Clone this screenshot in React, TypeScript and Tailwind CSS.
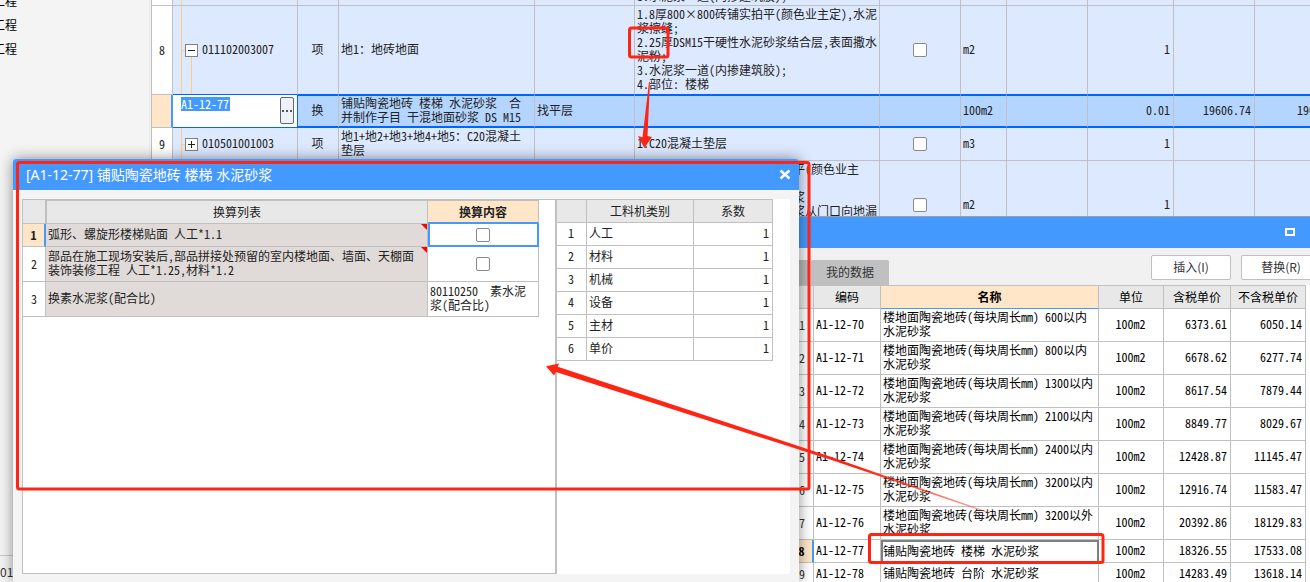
import React from "react";

type BillRow = {
  no: string;
  code: string;
  kind: string;
  name: string;
  feature: string;
  unit: string;
  qty: string;
  height: string;
  open?: boolean;
};

const topRow = "3.水泥浆一道(内掺建筑胶)；";

const billBefore: BillRow = {
  no: "8",
  code: "011102003007",
  kind: "项",
  name: "地1：地砖地面",
  feature:
    "1.8厚800×800砖铺实拍平(颜色业主定),水泥\n浆擦缝;\n2.25厚DSM15干硬性水泥砂浆结合层,表面撒水\n泥粉;\n3.水泥浆一道(内掺建筑胶);\n4.部位: 楼梯",
  unit: "m2",
  qty: "1",
  height: "h-[89px]",
  open: true,
};

const billAfter: BillRow[] = [
  {
    no: "9",
    code: "010501001003",
    kind: "项",
    name: "地1+地2+地3+地4+地5：C20混凝土\n垫层",
    feature: "1.C20混凝土垫层",
    unit: "m3",
    qty: "1",
    height: "h-[33px]",
  },
  {
    no: "10",
    code: "011102003008",
    kind: "项",
    name: "地2：防滑地砖地面",
    feature:
      "1.10厚300×300防滑砖铺实拍平(颜色业主\n定),水泥浆擦缝;\n2.25厚 DS M15 干硬性水泥砂浆\n3.最薄处约30厚DS M15水泥砂浆从门口向地漏\n找坡;\n4.部位: 卫生间",
    unit: "m2",
    qty: "1",
    height: "h-[89px]",
  },
];

const quotas = [
  ["1", "A1-12-70", "楼地面陶瓷地砖(每块周长mm) 600以内\n水泥砂浆", "6373.61", "6050.14"],
  ["2", "A1-12-71", "楼地面陶瓷地砖(每块周长mm) 800以内\n水泥砂浆", "6678.62", "6277.74"],
  ["3", "A1-12-72", "楼地面陶瓷地砖(每块周长mm) 1300以内\n水泥砂浆", "8617.54", "7879.44"],
  ["4", "A1-12-73", "楼地面陶瓷地砖(每块周长mm) 2100以内\n水泥砂浆", "8849.77", "8029.67"],
  ["5", "A1-12-74", "楼地面陶瓷地砖(每块周长mm) 2400以内\n水泥砂浆", "12428.87", "11145.47"],
  ["6", "A1-12-75", "楼地面陶瓷地砖(每块周长mm) 3200以内\n水泥砂浆", "12916.74", "11583.47"],
  ["7", "A1-12-76", "楼地面陶瓷地砖(每块周长mm) 3200以外\n水泥砂浆", "20392.86", "18129.83"],
  ["8", "A1-12-77", "铺贴陶瓷地砖 楼梯 水泥砂浆", "18326.55", "17533.08"],
  ["9", "A1-12-78", "铺贴陶瓷地砖 台阶 水泥砂浆", "14283.49", "13618.14"],
];

const factors = ["人工", "材料", "机械", "设备", "主材", "单价"];

const line = "border-r border-b border-[#c0c0c0] align-middle";
const pad = "pt-0 pr-[3px] pb-[2px] pl-[2px]";
const cell = `${line} ${pad}`;
const head = `${line} bg-[#e8e8e8] px-0 pt-0 pb-px font-normal text-center`;
const grid = "table-fixed border-separate border-spacing-0";

function Check({ label }: { label: string }) {
  return (
    <input
      type="checkbox"
      aria-label={label}
      className="mx-auto block size-[14px] appearance-none rounded-[2px] border border-[#8a8a8a] bg-white"
    />
  );
}

function TreeCell({ code, open }: { code: string; open?: boolean }) {
  return (
    <div className="relative flex h-full items-center pl-[9px]">
      <span className="absolute top-0 bottom-0 left-[5px] w-px bg-[#ffcc80]" />
      <span className="absolute left-[5px] h-px w-1 bg-[#ffcc80]" />
      {open && <span className="absolute top-1/2 bottom-0 left-[15px] w-px bg-[#ffcc80]" />}
      <button
        type="button"
        aria-label={open ? "折叠" : "展开"}
        className="relative flex size-[13px] items-center justify-center border border-[#808080] bg-white"
      >
        <svg viewBox="0 0 11 11" className="size-[11px]" shapeRendering="crispEdges">
          <path d={open ? "M2 5.5h7" : "M2 5.5h7M5.5 2v7"} stroke="#222" strokeWidth="1" />
        </svg>
      </button>
      <span className="pb-[2px] pl-1">{code}</span>
    </div>
  );
}

function BillLine({ row, edge }: { row: BillRow; edge?: boolean }) {
  const box = `${line} bg-[#dde9ff] ${edge ? "border-b-[#0066ff]" : ""}`;
  const c = `${box} ${pad}`;
  return (
    <tr className={row.height}>
      <td className={`${line} bg-white p-0 text-center`}>{row.no}</td>
      <td className={`${box} h-px py-0 pr-0 pl-[3px]`}>
        <TreeCell code={row.code} open={row.open} />
      </td>
      <td className={`${c} text-center`}>{row.kind}</td>
      <td className={c}>{row.name}</td>
      <td className={c} />
      <td className={c}>{row.feature}</td>
      <td className={`${box} p-0`}>
        <Check label={`${row.code} 锁定`} />
      </td>
      <td className={c}>{row.unit}</td>
      <td className={c} />
      <td className={`${c} text-right`}>{row.qty}</td>
      <td className={c} />
      <td className={c} />
    </tr>
  );
}

function BillTable() {
  const sel = `border-r border-r-[#c0c0c0] border-t border-b-2 border-t-[#0066ff] border-b-[#0066ff] bg-[#b3d5ff] align-middle ${pad}`;
  const top = "border-r border-b border-[#c0c0c0] bg-[#dde9ff] py-0 pr-[3px] pl-[2px]";
  return (
    <table className={`${grid} w-[1184px] border-l border-[#c0c0c0] leading-[14px] whitespace-pre text-[#222]`}>
      <colgroup>
        <col className="w-[21px]" />
        <col className="w-[125px]" />
        <col className="w-[41px]" />
        <col className="w-[196px]" />
        <col className="w-[100px]" />
        <col className="w-[245px]" />
        <col className="w-[81px]" />
        <col className="w-[46px]" />
        <col className="w-[81px]" />
        <col className="w-[86px]" />
        <col className="w-[81px]" />
        <col className="w-[81px]" />
      </colgroup>
      <tbody>
        <tr className="h-[6px]">
          <td className="border-r border-b border-[#c0c0c0] bg-white p-0" />
          <td className="border-r border-b border-[#c0c0c0] bg-[#dde9ff] py-0 pr-0 pl-[3px]">
            <div className="relative h-[5px]">
              <span className="absolute top-0 bottom-0 left-[5px] w-px bg-[#ffcc80]" />
            </div>
          </td>
          <td className={top} />
          <td className={top} />
          <td className={top} />
          <td className={top}>
            <div className="flex h-[5px] items-end overflow-hidden pb-[2px]">{topRow}</div>
          </td>
          <td className={top} />
          <td className={top} />
          <td className={top} />
          <td className={top} />
          <td className={top} />
          <td className={top} />
        </tr>
        <BillLine row={billBefore} edge />
        <tr className="h-[33px]">
          <td className="border-r-2 border-b border-r-[#4499ff] border-b-[#c0c0c0] bg-[#ffe6c8] p-0" />
          <td className="border-r border-b border-[#0066ff] bg-white p-0 align-top">
            <div className="flex justify-between pt-[2px] pr-[3px] pl-2">
              <input
                aria-label="编码"
                defaultValue="A1-12-77"
                className="h-[14px] w-[49px] bg-[#4499ff] p-0 leading-[14px] text-white"
              />
              <button
                type="button"
                aria-label="选择定额"
                className="flex h-[27px] w-[14px] items-center justify-center rounded-[2px] border border-[#666] bg-[#edf1f9]"
              >
                <svg viewBox="0 0 12 4" className="h-1 w-3 shrink-0" fill="#555" shapeRendering="crispEdges">
                  <rect x="1" y="1" width="2" height="2" />
                  <rect x="5" y="1" width="2" height="2" />
                  <rect x="9" y="1" width="2" height="2" />
                </svg>
              </button>
            </div>
          </td>
          <td className={`${sel} text-center`}>换</td>
          <td className={sel}>{"铺贴陶瓷地砖 楼梯 水泥砂浆  合\n并制作子目 干混地面砂浆 DS M15"}</td>
          <td className={sel}>找平层</td>
          <td className={sel} />
          <td className={sel} />
          <td className={sel}>100m2</td>
          <td className={sel} />
          <td className={`${sel} text-right`}>0.01</td>
          <td className={`${sel} text-right`}>19606.74</td>
          <td className="border-t border-r border-b-2 border-t-[#0066ff] border-r-[#c0c0c0] border-b-[#0066ff] bg-[#b3d5ff] pt-0 pr-[3px] pb-[2px] pl-[42px] align-middle">
            19606.74
          </td>
        </tr>
        {billAfter.map((r) => (
          <BillLine key={r.no} row={r} />
        ))}
      </tbody>
    </table>
  );
}

function QuotaWindow() {
  const ui = "font-['Noto_Sans_CJK_SC',sans-serif] text-[12px] leading-4 text-[#333] pb-[2px]";
  const btn = `h-[25px] w-20 shrink-0 rounded-[2px] border border-[#c0c0c0] bg-white ${ui}`;
  return (
    <section className="absolute top-[216px] right-0 bottom-0 left-[780px] flex flex-col overflow-hidden border-t border-[#a0a0a0] bg-[#f1f1f1]">
      <header className="flex h-[31px] shrink-0 items-center justify-end bg-[#4499ff] pr-[15px] pb-px">
        <button type="button" aria-label="最大化" className="h-2 w-[10px] border-2 border-white" />
      </header>
      <div className="flex h-[37px] shrink-0 items-end justify-between">
        <div className="flex gap-px">
          <button type="button" aria-label="定额" className="h-[25px] w-[30px] bg-[#b8b8b8]" />
          <button type="button" className={`h-[25px] w-[78px] rounded-t-[2px] bg-[#c0c0c0] ${ui}`}>
            我的数据
          </button>
        </div>
        <div className="-mr-[11px] flex gap-[10px] pb-[5px]">
          <button type="button" className={btn}>插入(I)</button>
          <button type="button" className={btn}>替换(R)</button>
        </div>
      </div>
      <div className="grow bg-white pl-[10px]">
        <table className={`${grid} w-[516px] border-t border-l border-[#c0c0c0] leading-[14px] whitespace-pre text-black`}>
          <colgroup>
            <col className="w-[23px]" />
            <col className="w-[67px]" />
            <col className="w-[218px]" />
            <col className="w-[65px]" />
            <col className="w-[67px]" />
            <col className="w-[75px]" />
          </colgroup>
          <thead>
            <tr className="h-[23px]">
              <th className={head} />
              <th className={head}>编码</th>
              <th className="border-r border-b border-r-[#c0c0c0] border-b-[#4499ff] bg-[#ffe6c8] p-0 text-center font-bold">名称</th>
              <th className={head}>单位</th>
              <th className={head}>含税单价</th>
              <th className={head}>不含税单价</th>
            </tr>
          </thead>
          <tbody>
            {quotas.map(([no, code, name, taxed, untaxed]) => {
              const on = no === "8";
              return (
                <tr key={no} className={Number(no) < 8 ? "h-[33px]" : "h-[23px]"}>
                  <td
                    className={
                      on
                        ? "border-r-2 border-b border-r-[#4499ff] border-b-[#c0c0c0] bg-[#ffe6c8] p-0 text-center font-bold"
                        : `${line} p-0 text-center text-[#333]`
                    }
                  >
                    {no}
                  </td>
                  <td className={cell}>{code}</td>
                  <td className={on ? "border-2 border-[#808080] px-0 pt-0 pb-[2px] align-middle" : cell}>{name}</td>
                  <td className={`${cell} text-center`}>100m2</td>
                  <td className={`${cell} text-right`}>{taxed}</td>
                  <td className={`${cell} text-right`}>{untaxed}</td>
                </tr>
              );
            })}
          </tbody>
        </table>
      </div>
    </section>
  );
}

function Corner() {
  return (
    <svg viewBox="0 0 6 6" className="absolute top-0 right-0 size-[6px]" fill="#ff0000">
      <path d="M0 0h6v6z" />
    </svg>
  );
}

function ConvertDialog() {
  const list = `relative border-r border-b border-[#c0c0c0] bg-[#e0dbd8] ${pad}`;
  return (
    <section
      role="dialog"
      aria-labelledby="convert-title"
      className="absolute top-[159px] bottom-0 left-[13px] flex w-[786px] flex-col rounded-t-[3px] bg-[#f4f4f4] shadow-[0_0_14px_rgba(0,0,0,0.45)]"
    >
      <header className="flex h-[31px] shrink-0 items-center justify-between rounded-t-[3px] bg-[#4499ff] pt-[2px] pr-2 pb-px pl-[13px]">
        <h1 id="convert-title" className="font-['Noto_Sans','Noto_Sans_CJK_SC',sans-serif] text-[14px] leading-5 text-white">
          [A1-12-77] 铺贴陶瓷地砖 楼梯 水泥砂浆
        </h1>
        <button type="button" aria-label="关闭" className="flex size-3 items-center justify-center">
          <svg viewBox="0 0 12 12" className="size-3" stroke="#fff" strokeWidth="2.4">
            <path d="M1.5 1.5l9 8M10.5 1.5l-9 8" />
          </svg>
        </button>
      </header>
      <div className="mx-[9px] mt-[9px] mb-2 flex grow leading-[14px] whitespace-pre text-[#222]">
        <div className="w-[535px] border-t border-r-2 border-b border-l border-[#c0c0c0] bg-white">
          <table className={`${grid} w-[516px]`}>
            <colgroup>
              <col className="w-[23px]" />
              <col className="w-[382px]" />
              <col className="w-[111px]" />
            </colgroup>
            <thead>
              <tr className="h-6">
                <th className={head} />
                <th className={`${head} border-t border-l`}>换算列表</th>
                <th className="border-t border-r border-b-2 border-t-[#c0c0c0] border-r-[#c0c0c0] border-b-[#4499ff] bg-[#ffe6c8] p-0 text-center font-bold">
                  换算内容
                </th>
              </tr>
            </thead>
            <tbody>
              <tr className="h-[23px]">
                <td className="border-r-2 border-b border-r-[#4499ff] border-b-[#c0c0c0] bg-[#ffe6c8] p-0 text-center font-bold">1</td>
                <td className={list}>
                  弧形、螺旋形楼梯贴面 人工*1.1
                  <Corner />
                </td>
                <td className="border-x-2 border-b-2 border-[#4499ff] py-0 pr-px pl-0">
                  <Check label="弧形、螺旋形楼梯贴面" />
                </td>
              </tr>
              <tr className="h-[35px]">
                <td className={`${line} p-0 text-center`}>2</td>
                <td className={list}>
                  {"部品在施工现场安装后,部品拼接处预留的室内楼地面、墙面、天棚面\n装饰装修工程 人工*1.25,材料*1.2"}
                  <Corner />
                </td>
                <td className={`${line} p-0`}>
                  <Check label="部品拼接处装饰装修工程" />
                </td>
              </tr>
              <tr className="h-[35px]">
                <td className={`${line} p-0 text-center`}>3</td>
                <td className={list}>换素水泥浆(配合比)</td>
                <td className={cell}>{"80110250  素水泥\n浆(配合比)"}</td>
              </tr>
            </tbody>
          </table>
        </div>
        <div className="grow bg-white">
          <table className={`${grid} w-[216px] border-t border-[#c0c0c0]`}>
            <colgroup>
              <col className="w-[30px]" />
              <col className="w-[107px]" />
              <col className="w-[79px]" />
            </colgroup>
            <thead>
              <tr className="h-[23px]">
                <th className={head} />
                <th className={head}>工料机类别</th>
                <th className={head}>系数</th>
              </tr>
            </thead>
            <tbody>
              {factors.map((f, i) => (
                <tr key={f} className="h-[23px]">
                  <td className={`${cell} text-center`}>{i + 1}</td>
                  <td className={cell}>{f}</td>
                  <td className={`${cell} text-right`}>1</td>
                </tr>
              ))}
            </tbody>
          </table>
        </div>
      </div>
    </section>
  );
}

function Marks() {
  return (
    <svg
      viewBox="0 0 1310 582"
      className="pointer-events-none absolute top-0 left-0 h-[582px] w-[1310px]"
      fill="none"
      stroke="#ff2414"
      strokeWidth="3"
    >
      <defs>
        <linearGradient id="fade" gradientUnits="userSpaceOnUse" x1="860" y1="462" x2="988" y2="512">
          <stop offset="0" stopColor="#ff2414" />
          <stop offset="1" stopColor="#ff2414" stopOpacity="0.4" />
        </linearGradient>
      </defs>
      <rect x="17.5" y="162.5" width="791.5" height="326.5" rx="2" />
      <rect x="629.5" y="28" width="38.5" height="29" rx="2" />
      <rect x="869.5" y="534.5" width="233.5" height="28" rx="2" />
      <path d="M644.3 148L638 136l4.500 1.300L649 82L650 82L647.500 136L652 137z" fill="#ff2414" stroke="none" />
      <path d="M546 366.300L559 363.500L557.800 366.800L830 456.500L990 512.500L989.500 513.500L830 459.500L556 372L554 375.500z" fill="url(#fade)" stroke="none" />
    </svg>
  );
}

export default function App() {
  return (
    <div className="relative flex h-screen overflow-hidden bg-[#f4f4f4] font-['Noto_Sans_Mono_CJK_SC','Noto_Sans_CJK_SC',monospace] text-[12px]">
      <nav className="flex w-[151px] shrink-0 flex-col justify-between border-r-2 border-[#eeeeee] font-['Noto_Sans_CJK_SC',sans-serif]">
        <ul className="-mt-[11px] w-[17px] text-black">
          {["土建工程", "装饰工程", "安装工程"].map((t) => (
            <li key={t} className="flex h-6 items-center justify-end overflow-hidden whitespace-nowrap">
              {t}
            </li>
          ))}
        </ul>
        <p className="h-[27px] border-t border-[#c8c8c8] pt-[6px] leading-5 text-[#333]">01</p>
      </nav>
      <main className="min-w-0 grow overflow-hidden">
        <BillTable />
      </main>
      <QuotaWindow />
      <ConvertDialog />
      <Marks />
    </div>
  );
}
